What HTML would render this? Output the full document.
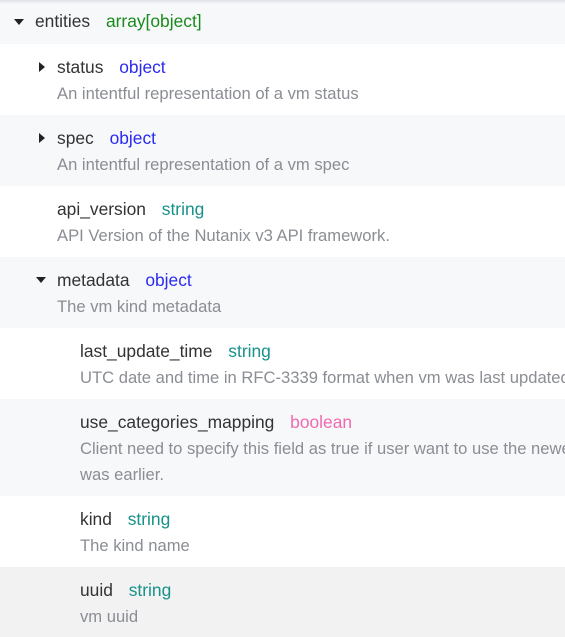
<!DOCTYPE html>
<html><head><style>
body{margin:0;width:565px;height:637px;overflow:hidden;font-family:"Liberation Sans",sans-serif;background:#fff}
.top{height:4px;background:linear-gradient(#dfe1e6,#f7f8fa)}
.r{position:absolute;left:0;width:565px;box-sizing:border-box}
.n{position:absolute;font-size:17.4px;color:#333;white-space:nowrap;line-height:20px}
.d{position:absolute;font-size:16.6px;color:#8a8d93;white-space:nowrap;line-height:26px}
.t{margin-left:11px}
.g{color:#1a8a1a}.b{color:#2b2bf0}.s{color:#17918a}.p{color:#f06ab0}
.ad,.ar{position:absolute;width:0;height:0}
.ad{border-left:5px solid transparent;border-right:5px solid transparent;border-top:6px solid #222}
.ar{border-top:5px solid transparent;border-bottom:5px solid transparent;border-left:6px solid #222}
</style></head><body>
<div class="r" style="top:0;height:44px;background:#f7f8fa"><div class="top"></div>
<div class="ad" style="left:14px;top:19px"></div><div class="n" style="left:35px;top:11px">entities <span class="t g">array[object]</span></div></div>

<div class="r" style="top:44px;height:71px;background:#fff">
<div class="ar" style="left:39px;top:18px"></div><div class="n" style="left:57px;top:13px">status <span class="t b">object</span></div>
<div class="d" style="left:57px;top:37px">An intentful representation of a vm status</div></div>

<div class="r" style="top:115px;height:71px;background:#f7f8fa">
<div class="ar" style="left:39px;top:18px"></div><div class="n" style="left:57px;top:13px">spec <span class="t b">object</span></div>
<div class="d" style="left:57px;top:37px">An intentful representation of a vm spec</div></div>

<div class="r" style="top:186px;height:71px;background:#fff">
<div class="n" style="left:57px;top:13px">api_version <span class="t s">string</span></div>
<div class="d" style="left:57px;top:37px">API Version of the Nutanix v3 API framework.</div></div>

<div class="r" style="top:257px;height:71px;background:#f7f8fa">
<div class="ad" style="left:36px;top:20px"></div><div class="n" style="left:57px;top:13px">metadata <span class="t b">object</span></div>
<div class="d" style="left:57px;top:37px">The vm kind metadata</div></div>

<div class="r" style="top:328px;height:71px;background:#fff">
<div class="n" style="left:80px;top:13px">last_update_time <span class="t s">string</span></div>
<div class="d" style="left:80px;top:37px">UTC date and time in RFC-3339 format when vm was last updated</div></div>

<div class="r" style="top:399px;height:97px;background:#f7f8fa">
<div class="n" style="left:80px;top:13px">use_categories_mapping <span class="t p">boolean</span></div>
<div class="d" style="left:80px;top:37px">Client need to specify this field as true if user want to use the newer<br>was earlier.</div></div>

<div class="r" style="top:496px;height:71px;background:#fff">
<div class="n" style="left:80px;top:13px">kind <span class="t s">string</span></div>
<div class="d" style="left:80px;top:37px">The kind name</div></div>

<div class="r" style="top:567px;height:70px;background:#f2f2f2">
<div class="n" style="left:80px;top:13px">uuid <span class="t s">string</span></div>
<div class="d" style="left:80px;top:37px">vm uuid</div></div>
</body></html>
